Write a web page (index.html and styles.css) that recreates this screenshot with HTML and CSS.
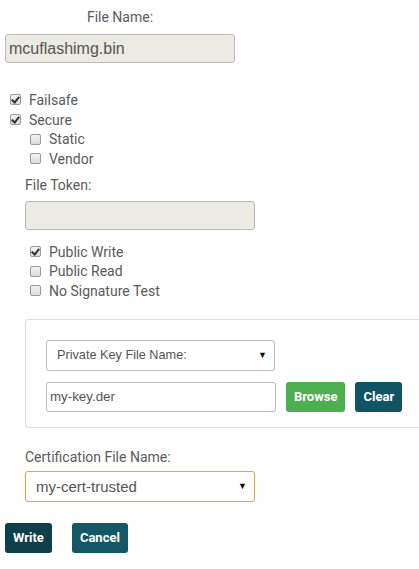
FILE: index.html
```html
<!DOCTYPE html>
<html>
<head>
<meta charset="utf-8">
<link rel="stylesheet" href="styles.css">
</head>
<body>
<div class="page">
  <div class="fn-group">
    <div class="fn-label">File Name:</div>
    <div class="field readonly big">mcuflashimg.bin</div>
  </div>

  <div class="checks top">
    <div class="check"><span class="box on"></span><span>Failsafe</span></div>
    <div class="check"><span class="box on"></span><span>Secure</span></div>
    <div class="checks nested">
      <div class="check"><span class="box"></span><span>Static</span></div>
      <div class="check"><span class="box"></span><span>Vendor</span></div>
    </div>
  </div>

  <div class="section">
    <div class="label">File Token:</div>
    <div class="field readonly token"></div>
    <div class="checks sub">
      <div class="check"><span class="box on"></span><span>Public Write</span></div>
      <div class="check"><span class="box"></span><span>Public Read</span></div>
      <div class="check"><span class="box"></span><span>No Signature Test</span></div>
    </div>

    <div class="panel">
      <div class="select key"><span>Private Key File Name:</span><span class="arrow">&#9660;</span></div>
      <div class="row">
        <div class="field keyfile">my-key.der</div>
        <button class="btn green">Browse</button>
        <button class="btn teal">Clear</button>
      </div>
    </div>

    <div class="label cert-label">Certification File Name:</div>
    <div class="select cert"><span>my-cert-trusted</span><span class="arrow">&#9660;</span></div>
  </div>

  <div class="actions">
    <button class="btn dark">Write</button>
    <button class="btn teal cancel">Cancel</button>
  </div>
</div>
</body>
</html>
```

FILE: styles.css
```css
html, body {
  margin: 0;
  padding: 0;
  background: #fff;
}
body {
  font-family: Roboto, "Liberation Sans", sans-serif;
  font-size: 14px;
  color: #5a5a5a;
  overflow: hidden;
}
.page {
  padding: 9px 0 0 5px;
}
.fn-group {
  width: 230px;
}
.fn-label {
  text-align: center;
  line-height: 17px;
  margin-bottom: 8px;
}
.field {
  box-sizing: border-box;
  border: 1px solid #bbb;
  border-radius: 3px;
  background: #fff;
  height: 29px;
  line-height: 27px;
  padding: 0 3px;
  color: #555;
  font-family: "Liberation Sans", Arial, sans-serif;
}
.readonly {
  background: #ebeae3;
}
.big {
  font-size: 16px;
}
.checks {
  display: flex;
  flex-direction: column;
}
.checks.top {
  margin-top: 27px;
  padding-left: 5px;
}
.checks.nested {
  padding-left: 20px;
}
.check {
  display: flex;
  align-items: center;
  height: 19.7px;
  gap: 8px;
}
.box {
  box-sizing: border-box;
  width: 11px;
  height: 11px;
  border: 1px solid #9a9a9a;
  border-radius: 2px;
  background: linear-gradient(#f2f2f2, #dcdcdc);
  position: relative;
  flex: none;
}
.box.on::after {
  content: "";
  position: absolute;
  left: 2px;
  top: 0px;
  width: 3px;
  height: 6px;
  border: solid #333;
  border-width: 0 2px 2px 0;
  transform: rotate(40deg);
}
.section {
  padding-left: 20px;
}
.label {
  line-height: 17px;
}
.section > .label:first-child {
  margin-top: 8px;
}
.token {
  width: 230px;
  margin-top: 7px;
}
.checks.sub {
  margin-top: 12px;
  padding-left: 5px;
}
.panel {
  margin-top: 18px;
  margin-right: -10px;
  border: 1px solid #ddd;
  border-right: none;
  border-radius: 4px 0 0 4px;
  padding: 20px 20px 15px 20px;
  display: flex;
  flex-direction: column;
  gap: 11px;
}
.select {
  box-sizing: border-box;
  display: flex;
  align-items: center;
  justify-content: space-between;
  border: 1px solid #bbb;
  border-radius: 3px;
  height: 31px;
  padding: 0 7px 0 10px;
  font-family: "Liberation Sans", Arial, sans-serif;
  font-size: 12.7px;
  color: #555;
}
.select .arrow {
  font-size: 9px;
  color: #111;
}
.select.key {
  width: 229px;
}
.row {
  display: flex;
  gap: 10px;
  align-items: center;
}
.keyfile {
  width: 230px;
  font-size: 13.33px;
  height: 30px;
  line-height: 28px;
}
.btn {
  border: none;
  border-radius: 3px;
  color: #fff;
  font-family: Roboto, "Liberation Sans", sans-serif;
  font-weight: bold;
  font-size: 13px;
  height: 30px;
  padding: 0 8px;
}
.green {
  background: #4caf50;
}
.teal {
  background: #115564;
}
.dark {
  background: #0e3f4b;
}
.cert-label {
  margin-top: 21px;
}
.select.cert {
  margin-top: 5px;
  width: 230px;
  border-color: #e6a840;
  box-shadow: 0 0 1px #f0c070;
  padding-left: 10px;
  font-size: 15px;
}
.actions {
  display: flex;
  gap: 20px;
  margin-top: 21px;
}
.cancel {
  background: #145766;
}
```
